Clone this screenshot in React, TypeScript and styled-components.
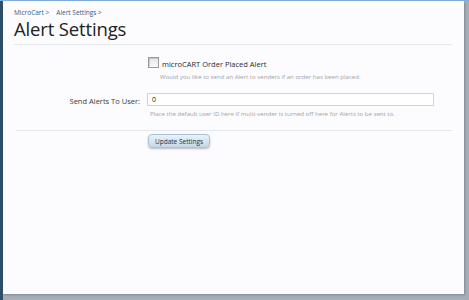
import styled, { createGlobalStyle } from "styled-components";

const GlobalStyle = createGlobalStyle`
  html, body {
    margin: 0;
    padding: 0;
  }
  body {
    font-family: "Open Sans", "DejaVu Sans", sans-serif;
    background: #a2abb3;
  }
`;

const Frame = styled.div`
  width: 469px;
  height: 300px;
  display: flex;
  align-items: flex-start;
  background: #a5aeb6;
  border-top: 1px solid #7fb0e0;
  box-sizing: border-box;
`;

const LeftEdge = styled.div`
  width: 3px;
  align-self: stretch;
  background: #2f4d68;
`;

const Panel = styled.div`
  width: 461px;
  height: 293px;
  background: #fcfcfe;
  box-sizing: border-box;
  padding: 7px 12px 0 11px;
  box-shadow: 1px 1px 2px rgba(60, 70, 80, 0.35);
`;

const Crumbs = styled.div`
  display: flex;
  gap: 7px;
  font-size: 6.5px;
  color: #2c5d8c;
`;

const Title = styled.h1`
  margin: 0;
  font-size: 18.5px;
  line-height: 24px;
  font-weight: 400;
  color: #222;
  letter-spacing: -0.15px;
  padding-bottom: 3px;
  border-bottom: 1px solid #e4e8ee;
`;

const Form = styled.div`
  padding-top: 14px;
`;

const Row = styled.div`
  display: grid;
  grid-template-columns: 126px 1fr;
  column-gap: 8px;
  margin-bottom: 12px;
`;

const FieldLabel = styled.label`
  text-align: right;
  font-size: 7.5px;
  color: #3a3a3a;
  padding-top: 3px;
`;

const CheckLine = styled.label`
  display: flex;
  align-items: center;
  gap: 3px;
  font-size: 7.5px;
  color: #2a2a2a;
`;

const Box = styled.span`
  width: 9px;
  height: 9px;
  border: 1px solid #9a9a9a;
  background: linear-gradient(to bottom, #e6e6e6, #fafafa);
  box-shadow: inset 1px 1px 1px rgba(0, 0, 0, 0.15);
  margin-top: -3px;
`;

const Hint = styled.p<{ $indent?: number }>`
  margin: 3px 0 0 ${({ $indent }) => $indent ?? 0}px;
  font-size: 6.1px;
  color: #a2a2a2;
`;

const Input = styled.div`
  width: 287px;
  height: 13px;
  margin-left: -1px;
  box-sizing: border-box;
  border: 1px solid #cfd4da;
  background: #fff;
  font-size: 7px;
  color: #222;
  padding: 1px 4px;
  line-height: 10px;
`;

const Divider = styled.hr`
  border: 0;
  border-top: 1px solid #e4e8ee;
  margin: 4px 0 3px 2px;
`;

const Button = styled.button`
  display: block;
  margin-left: 134px;
  font-family: inherit;
  font-size: 6.5px;
  color: #1f2f40;
  padding: 0 6px;
  height: 14px;
  border: 1px solid #a9c2d6;
  border-radius: 4px;
  background: linear-gradient(to bottom, #e9f2f9, #c4d8e8);
  box-shadow: 0 1px 2px rgba(0, 0, 0, 0.25);
`;

export default function App() {
  return (
    <>
      <GlobalStyle />
      <Frame>
        <LeftEdge />
        <Panel>
          <Crumbs>
            <span>MicroCart &gt;</span>
            <span>Alert Settings &gt;</span>
          </Crumbs>
          <Title>Alert Settings</Title>
          <Form>
            <Row>
              <span />
              <div>
                <CheckLine>
                  <Box />
                  microCART Order Placed Alert
                </CheckLine>
                <Hint $indent={12}>
                  Would you like to send an Alert to venders if an order has been placed.
                </Hint>
              </div>
            </Row>
            <Row>
              <FieldLabel>Send Alerts To User:</FieldLabel>
              <div>
                <Input>0</Input>
                <Hint $indent={2}>
                  Place the default user ID here if multi-vender is turned off here for Alerts to be sent to.
                </Hint>
              </div>
            </Row>
          </Form>
          <Divider />
          <Button>Update Settings</Button>
        </Panel>
      </Frame>
    </>
  );
}
